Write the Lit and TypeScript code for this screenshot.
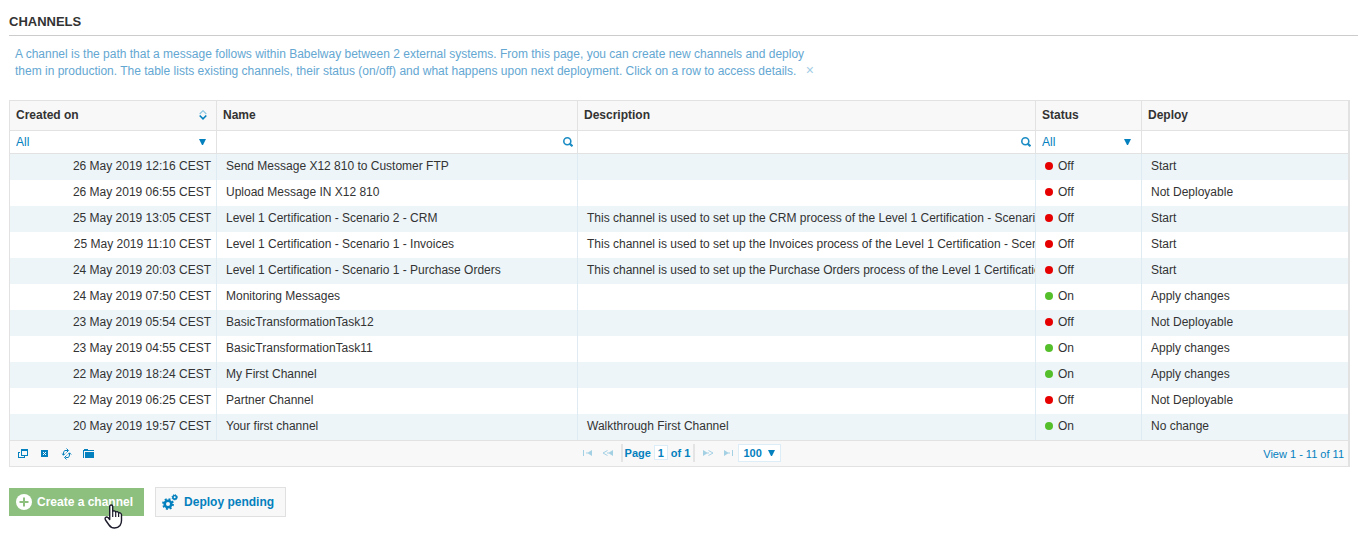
import { LitElement, html, css, svg } from "lit";
import { customElement, property, state } from "lit/decorators.js";
import { classMap } from "lit/directives/class-map.js";

interface Channel {
  created: string;
  name: string;
  description: string;
  on: boolean;
  deploy: string;
}

const channels: Channel[] = [
  { created: "26 May 2019 12:16 CEST", name: "Send Message X12 810 to Customer FTP", description: "", on: false, deploy: "Start" },
  { created: "26 May 2019 06:55 CEST", name: "Upload Message IN X12 810", description: "", on: false, deploy: "Not Deployable" },
  { created: "25 May 2019 13:05 CEST", name: "Level 1 Certification - Scenario 2 - CRM", description: "This channel is used to set up the CRM process of the Level 1 Certification - Scenario", on: false, deploy: "Start" },
  { created: "25 May 2019 11:10 CEST", name: "Level 1 Certification - Scenario 1 - Invoices", description: "This channel is used to set up the Invoices process of the Level 1 Certification - Scenario", on: false, deploy: "Start" },
  { created: "24 May 2019 20:03 CEST", name: "Level 1 Certification - Scenario 1 - Purchase Orders", description: "This channel is used to set up the Purchase Orders process of the Level 1 Certification", on: false, deploy: "Start" },
  { created: "24 May 2019 07:50 CEST", name: "Monitoring Messages", description: "", on: true, deploy: "Apply changes" },
  { created: "23 May 2019 05:54 CEST", name: "BasicTransformationTask12", description: "", on: false, deploy: "Not Deployable" },
  { created: "23 May 2019 04:55 CEST", name: "BasicTransformationTask11", description: "", on: true, deploy: "Apply changes" },
  { created: "22 May 2019 18:24 CEST", name: "My First Channel", description: "", on: true, deploy: "Apply changes" },
  { created: "22 May 2019 06:25 CEST", name: "Partner Channel", description: "", on: false, deploy: "Not Deployable" },
  { created: "20 May 2019 19:57 CEST", name: "Your first channel", description: "Walkthrough First Channel", on: true, deploy: "No change" },
];

const shapes = {
  sort: { w: 8, h: 10, body: svg`<path d="M.7 4 4 .7 7.300 4" fill="none" stroke="#8cc6e0" stroke-width="1.200"/><path d="M.7 5.500 4 8.800 7.300 5.500" fill="none" stroke="#0480be" stroke-width="1.600"/>` },
  search: { w: 10, h: 10, body: svg`<circle cx="4.300" cy="4.300" r="3.500" fill="none" stroke="#1c8cc4" stroke-width="1.600"/><path d="M6.600 6.600 9.500 9.200" stroke="#1c8cc4" stroke-width="2.200"/>` },
  arrow: { w: 7, h: 6, body: svg`<path d="M0 0H7L4 6H3Z" fill="#0480be"/>` },
  columns: { w: 12, h: 12, body: svg`<path shape-rendering="crispEdges" fill="#0480be" fill-rule="evenodd" d="M4 1h7v7H4zM5 3v4h5V3zM1 4h2v1H2v4h5V8h1v2H1z"/>` },
  clear: { w: 12, h: 12, body: svg`<path shape-rendering="crispEdges" fill="#0480be" fill-rule="evenodd" d="M2 2h7v7H2zM4 4v1h1v1H4v1h1V6h1v1h1V6H6V5h1V4H6v1H5V4z"/>` },
  refresh: { w: 12, h: 12, body: svg`<path d="M5.500.5 7.500 2.500 5.500 4.500M7 2.500H4Q2.500 3 2.500 5V7M.8 5.500 2.500 7.200 4.200 5.500M5.500 7.500 3.500 9.500 5.500 11.500M4.500 9.500H7Q8.500 9 8.500 7V5M6.800 6.500 8.500 4.800 10.200 6.500" fill="none" stroke="#0480be"/>` },
  folder: { w: 12, h: 12, body: svg`<path shape-rendering="crispEdges" fill="#0480be" d="M0 2h1V1h4v1h6v1H1v7H0zM2 4h9v6H2z"/>` },
  first: { w: 10, h: 7, body: svg`<path fill="#a4d0e4" d="M0 1h1v6H0zM3 3.500H5L9 1V7L5 4.500H3Z"/>` },
  prev: { w: 12, h: 7, body: svg`<path fill="none" stroke="#a4d0e4" d="M5.500 1.500 1 4 5.500 6.500"/><path fill="#a4d0e4" d="M5 3.500H7L11 1V7L7 4.500H5Z"/>` },
  plus: { w: 16, h: 16, body: svg`<circle cx="8" cy="8" r="8" fill="#fff"/><path d="M8 3.500V12.500M3.500 8H12.500" stroke="#8dc07f" stroke-width="2"/>` },
  gears: { w: 16, h: 16, body: svg`<circle cx="6" cy="10" r="3.300" fill="none" stroke="#0480be" stroke-width="2.600"/><circle cx="6" cy="10" r="4.900" fill="none" stroke="#0480be" stroke-width="2" stroke-dasharray="1.924 1.924"/><circle cx="12.700" cy="3.300" r="1.800" fill="none" stroke="#0480be" stroke-width="1.700"/><circle cx="12.700" cy="3.300" r="2.700" fill="none" stroke="#0480be" stroke-width="0.900" stroke-dasharray="1.060 1.060"/>` },
  hand: { w: 19, h: 25, body: svg`<path fill="#fff" stroke="#1b1b2b" stroke-width="1.400" stroke-linejoin="round" d="M5.700 15.500V2.500Q5.700 1 7.200 1T8.700 2.500V7.500Q9.200 6.700 10.300 6.900T11.700 8.200Q12.300 7.400 13.300 7.700T14.600 9.200Q15.500 8.500 16.400 9T17.500 10.700V16.500Q17.500 19.500 16 21.500 14 24 10.500 24T5 21L1.500 16Q.6 14 1.700 13.300T4 13.500Z"/><path fill="none" stroke="#1b1b2b" stroke-width="1.200" d="M8.700 7.500V13M11.700 8.200V13M14.600 9.200V13"/>` },
};

const icon = (name: keyof typeof shapes, cls = "") => {
  const s = shapes[name];
  return html`<svg class="icon ${cls}" width=${s.w} height=${s.h} viewBox="0 0 ${s.w} ${s.h}" aria-hidden="true">${s.body}</svg>`;
};

const base = css`
  * {
    box-sizing: border-box;
  }
  button,
  select,
  input {
    font: inherit;
    color: inherit;
    margin: 0;
    padding: 0;
    border: 0;
    background: none;
    appearance: none;
    outline: none;
  }
  .icon {
    display: block;
    flex: none;
  }
`;

@customElement("channel-pager")
class ChannelPager extends LitElement {
  static styles = [
    base,
    css`
      :host {
        display: grid;
        grid-template-columns: 1fr auto 1fr;
        align-items: center;
        height: 25px;
        padding: 0 4px 0 7px;
        background: #f8f8f8;
        color: #0480be;
        font-size: 11px;
      }
      .tools {
        display: flex;
        gap: 10px;
      }
      .pager {
        display: flex;
        align-items: center;
        padding: 0 4px 2px 0;
        font-weight: bold;
      }
      .steps {
        display: flex;
        align-items: center;
        gap: 9px;
        padding: 0 7px;
      }
      .after {
        padding-right: 5px;
      }
      .flip {
        transform: scaleX(-1);
      }
      .page {
        display: flex;
        align-items: center;
        gap: 3px;
        height: 18px;
        padding: 0 3px 0 2px;
        border: solid #e4e4e4;
        border-width: 0 2px;
      }
      .number {
        width: 14px;
        height: 15px;
        border: 1px solid #dcedf7;
        background: #fff;
        text-align: center;
      }
      .size {
        display: flex;
        align-items: center;
        height: 18px;
        padding: 0 5px 0 4px;
        border: 1px solid #dcedf7;
        background: #fff;
      }
      .size select {
        width: 25px;
      }
      .view {
        justify-self: end;
      }
    `,
  ];

  @property({ type: Number }) total = 0;

  render() {
    return html`
      <div class="tools">
        <button aria-label="Choose columns">${icon("columns")}</button>
        <button aria-label="Clear filters">${icon("clear")}</button>
        <button aria-label="Refresh">${icon("refresh")}</button>
        <button aria-label="Export">${icon("folder")}</button>
      </div>
      <div class="pager">
        <div class="steps">
          <button aria-label="First page">${icon("first")}</button>
          <button aria-label="Previous page">${icon("prev")}</button>
        </div>
        <label class="page">Page <input class="number" value="1" /> of 1</label>
        <div class="steps after">
          <button aria-label="Next page">${icon("prev", "flip")}</button>
          <button aria-label="Last page">${icon("first", "flip")}</button>
        </div>
        <div class="size">
          <select aria-label="Rows per page"><option>100</option></select>
          ${icon("arrow")}
        </div>
      </div>
      <div class="view">View 1 - ${this.total} of ${this.total}</div>
    `;
  }
}

@customElement("channel-table")
class ChannelTable extends LitElement {
  static styles = [
    base,
    css`
      :host {
        display: block;
        border: 1px solid #e2e2e2;
        border-right-width: 2px;
      }
      table {
        width: 100%;
        table-layout: fixed;
        border-collapse: separate;
        border-spacing: 0;
      }
      .date {
        width: 207px;
      }
      .deploy {
        width: 206px;
      }
      .name {
        width: 361px;
      }
      .status {
        width: 106px;
      }
      th,
      td {
        overflow: hidden;
        padding: 0;
        border-right: 1px solid #e2e2e2;
        text-align: left;
        white-space: nowrap;
      }
      th:last-child,
      td:last-child {
        border-right: 0;
      }
      .heads th {
        height: 30px;
        padding: 0 9px 2px 6px;
        border-bottom: 1px solid #e2e2e2;
        background: #f8f8f8;
      }
      .head,
      .filter {
        display: flex;
        align-items: center;
        justify-content: space-between;
      }
      .filters td {
        height: 23px;
        border-bottom: 1px solid #e2e2e2;
      }
      .filter {
        padding: 0 4px 0 6px;
        color: #0480be;
      }
      .choice {
        padding-right: 10px;
      }
      .filter select,
      .filter input {
        flex: 1;
        min-width: 0;
      }
      .row td {
        height: 26px;
        padding: 0 0 2px 9px;
        border-right-color: #dfebf3;
      }
      .row .created {
        padding: 0 5px 2px 0;
        text-align: right;
      }
      .row:nth-child(odd) td {
        background: #edf5f9;
      }
      .state {
        display: flex;
        align-items: center;
        gap: 5px;
      }
      .dot {
        width: 8px;
        height: 8px;
        border-radius: 50%;
        background: #e60000;
      }
      .on {
        background: #55bf2b;
      }
      channel-pager {
        border-top: 1px solid #e2e2e2;
        box-sizing: content-box;
      }
    `,
  ];

  @property({ attribute: false }) rows: Channel[] = [];

  private choice(label: string) {
    return html`<td>
      <div class="filter choice">
        <select aria-label=${label}><option>All</option></select>
        ${icon("arrow")}
      </div>
    </td>`;
  }

  private search(label: string) {
    return html`<td>
      <div class="filter"><input aria-label=${label} />${icon("search")}</div>
    </td>`;
  }

  render() {
    return html`
      <table>
        <colgroup>
          <col class="date" />
          <col class="name" />
          <col />
          <col class="status" />
          <col class="deploy" />
        </colgroup>
        <thead>
          <tr class="heads">
            <th><div class="head">Created on ${icon("sort")}</div></th>
            <th>Name</th>
            <th>Description</th>
            <th>Status</th>
            <th>Deploy</th>
          </tr>
          <tr class="filters">
            ${this.choice("Created on")} ${this.search("Name")} ${this.search("Description")}
            ${this.choice("Status")}
            <td></td>
          </tr>
        </thead>
        <tbody>
          ${this.rows.map(
            (c) => html`<tr class="row">
              <td class="created">${c.created}</td>
              <td>${c.name}</td>
              <td>${c.description}</td>
              <td>
                <div class="state"><span class=${classMap({ dot: true, on: c.on })}></span>${c.on ? "On" : "Off"}</div>
              </td>
              <td>${c.deploy}</td>
            </tr>`
          )}
        </tbody>
      </table>
      <channel-pager .total=${this.rows.length}></channel-pager>
    `;
  }
}

@customElement("app-root")
class AppRoot extends LitElement {
  static styles = [
    base,
    css`
      :host {
        display: block;
        padding: 14px 0 16px 9px;
        color: #333;
        font: 12px/16px "Liberation Sans", Arial, sans-serif;
      }
      h1 {
        margin: 0;
        padding-bottom: 6px;
        border-bottom: 1px solid #ccc;
        font-size: 13px;
        line-height: 15px;
      }
      .intro {
        max-width: 812px;
        margin: 10px 0 20px;
        padding-left: 6px;
        color: #64a7d2;
        line-height: 17px;
      }
      .close {
        padding-left: 6px;
        color: #a3cde6;
        font-size: 14px;
        line-height: 12px;
      }
      channel-table {
        margin-right: 8px;
      }
      .actions {
        display: flex;
        align-items: center;
        gap: 11px;
        margin-top: 20px;
      }
      .action {
        display: flex;
        align-items: center;
        gap: 6px;
        height: 30px;
        padding: 0 11px 0 6px;
        border: 1px solid #e0e0e0;
        background: #f8f8f8;
        color: #0480be;
        font-weight: bold;
      }
      .create {
        height: 28px;
        gap: 5px;
        padding-left: 7px;
        border: 0;
        background: #8dc07f;
        color: #fff;
      }
      .hovered {
        position: relative;
      }
      .pointer {
        position: absolute;
        left: 95px;
        top: 16px;
        pointer-events: none;
      }
    `,
  ];

  @state() private introOpen = true;

  render() {
    return html`
      <h1>CHANNELS</h1>
      ${this.introOpen
        ? html`<p class="intro">
            A channel is the path that a message follows within Babelway between 2 external systems. From this page, you
            can create new channels and deploy them in production. The table lists existing channels, their status
            (on/off) and what happens upon next deployment. Click on a row to access details.
            <button class="close" aria-label="Close" @click=${() => (this.introOpen = false)}>×</button>
          </p>`
        : ""}
      <channel-table .rows=${channels}></channel-table>
      <div class="actions">
        <div class="hovered">
          <button class="action create">${icon("plus")} Create a channel</button>
          ${icon("hand", "pointer")}
        </div>
        <button class="action">${icon("gears")} Deploy pending</button>
      </div>
    `;
  }
}
